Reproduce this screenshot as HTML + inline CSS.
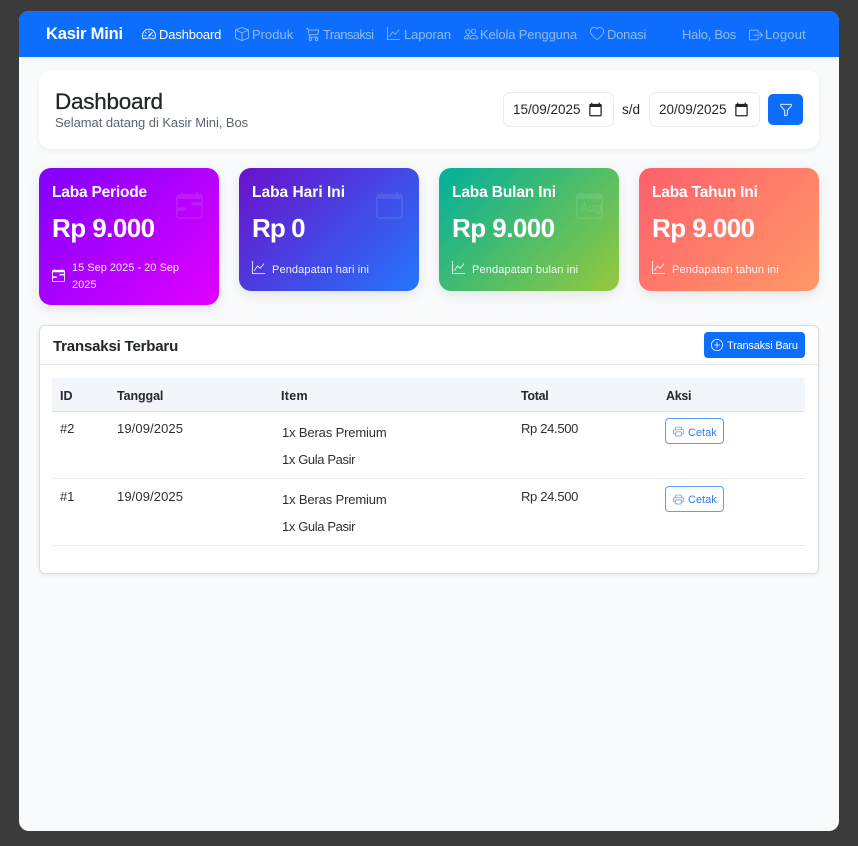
<!DOCTYPE html>
<html lang="id">
<head>
<meta charset="utf-8">
<title>Kasir Mini - Dashboard</title>
<style>
html,body{margin:0;padding:0;width:858px;height:846px;overflow:hidden;background:#3b3b3b;font-family:"Liberation Sans",sans-serif}
#win{position:absolute;left:19px;top:11px;width:820px;height:820px;background:#f8fafc;border-radius:10px;overflow:hidden}
#root{position:absolute;left:0;top:0;width:858px;height:846px}
.t{position:absolute;white-space:nowrap;line-height:20px;color:#212529}
.b{font-weight:bold}
.n{font-size:13px;color:#8fbbfe}
.w{color:#fff}
.s{font-size:11px;color:rgba(255,255,255,.92)}
.c{font-size:13px;color:#2b3035}
.h{font-size:12.5px;font-weight:bold;color:#24292e}
svg{position:absolute;fill:currentColor;display:block}
.box{position:absolute;box-sizing:border-box}
.card{position:absolute;width:180px;border-radius:12px;box-shadow:0 4px 12px rgba(0,0,0,.09)}
.big{color:#fff;opacity:.1}
.inp{background:#fff;border:1px solid #e9ecef;border-radius:7px;width:111px;height:35px;top:92px}
.cet{left:665px;width:59px;height:26px;border:1px solid #5f9cf5;border-radius:4px;background:#fff}
</style>
</head>
<body>
<svg width="0" height="0" style="position:absolute">
<defs>
<symbol id="gauge" viewBox="0 0 16 16"><path d="M8 4a.5.5 0 0 1 .5.5V6a.5.5 0 0 1-1 0V4.5A.5.5 0 0 1 8 4M3.732 5.732a.5.5 0 0 1 .707 0l.915.914a.5.5 0 1 1-.708.708l-.914-.915a.5.5 0 0 1 0-.707M2 10a.5.5 0 0 1 .5-.5h1.586a.5.5 0 0 1 0 1H2.5A.5.5 0 0 1 2 10m9.5 0a.5.5 0 0 1 .5-.5h1.5a.5.5 0 0 1 0 1H12a.5.5 0 0 1-.5-.5m.754-4.246a.39.39 0 0 0-.527-.02L7.547 9.31a.91.91 0 1 0 1.302 1.258l3.434-4.297a.39.39 0 0 0-.029-.518z"/><path fill-rule="evenodd" d="M0 10a8 8 0 1 1 15.547 2.661c-.442 1.253-1.845 1.602-2.932 1.25C11.309 13.488 9.475 13 8 13c-1.474 0-3.31.488-4.615.911-1.087.352-2.49.003-2.932-1.25A8 8 0 0 1 0 10m8-7a7 7 0 0 0-6.603 9.329c.203.575.923.876 1.68.63C4.397 12.533 6.358 12 8 12s3.604.532 4.923.96c.757.245 1.477-.056 1.68-.631A7 7 0 0 0 8 3"/></symbol>
<symbol id="box" viewBox="0 0 16 16"><path d="M8.186 1.113a.5.5 0 0 0-.372 0L1.846 3.5 8 5.961 14.154 3.5zM15 4.239l-6.5 2.6v7.922l6.5-2.6V4.24zM7.5 14.762V6.838L1 4.239v7.925zM7.443.184a1.5 1.5 0 0 1 1.114 0l7.129 2.852A.5.5 0 0 1 16 3.5v8.662a1 1 0 0 1-.629.928l-7.185 2.874a.5.5 0 0 1-.372 0L.63 13.09a1 1 0 0 1-.63-.928V3.5a.5.5 0 0 1 .314-.464z"/></symbol>
<symbol id="cart" viewBox="0 0 16 16"><path d="M0 1.5A.5.5 0 0 1 .5 1H2a.5.5 0 0 1 .485.379L2.89 3H14.5a.5.5 0 0 1 .49.598l-1 5a.5.5 0 0 1-.465.401l-9.397.472L4.415 11H13a.5.5 0 0 1 0 1H4a.5.5 0 0 1-.491-.408L2.01 3.607 1.61 2H.5a.5.5 0 0 1-.5-.5M3.102 4l.84 4.479 9.144-.459L13.89 4zM5 12a2 2 0 1 0 0 4 2 2 0 0 0 0-4m7 0a2 2 0 1 0 0 4 2 2 0 0 0 0-4m-7 1a1 1 0 1 1 0 2 1 1 0 0 1 0-2m7 0a1 1 0 1 1 0 2 1 1 0 0 1 0-2"/></symbol>
<symbol id="graph" viewBox="0 0 16 16"><path fill-rule="evenodd" d="M0 0h1v15h15v1H0zm14.817 3.113a.5.5 0 0 1 .07.704l-4.5 5.5a.5.5 0 0 1-.74.037L7.06 6.767l-3.656 5.027a.5.5 0 0 1-.808-.588l4-5.5a.5.5 0 0 1 .758-.06l2.609 2.61 4.15-5.073a.5.5 0 0 1 .704-.07"/></symbol>
<symbol id="people" viewBox="0 0 16 16"><path d="M15 14s1 0 1-1-1-4-5-4-5 3-5 4 1 1 1 1zm-7.978-1L7 12.996c.001-.264.167-1.03.76-1.72C8.312 10.629 9.282 10 11 10c1.717 0 2.687.63 3.24 1.276.593.69.758 1.457.76 1.72l-.008.002-.014.002zM11 7a2 2 0 1 0 0-4 2 2 0 0 0 0 4m3-2a3 3 0 1 1-6 0 3 3 0 0 1 6 0M6.936 9.28a6 6 0 0 0-1.23-.247A7 7 0 0 0 5 9c-4 0-5 3-5 4q0 1 1 1h4.216A2.24 2.24 0 0 1 5 13c0-1.01.377-2.042 1.09-2.904.243-.294.526-.569.846-.816M4.92 10A5.5 5.5 0 0 0 4 13H1c0-.26.164-1.03.76-1.724.545-.636 1.492-1.256 3.16-1.275ZM1.5 5.5a3 3 0 1 1 6 0 3 3 0 0 1-6 0m3-2a2 2 0 1 0 0 4 2 2 0 0 0 0-4"/></symbol>
<symbol id="heart" viewBox="0 0 16 16"><path d="m8 2.748-.717-.737C5.6.281 2.514.878 1.4 3.053c-.523 1.023-.641 2.5.314 4.385.92 1.815 2.834 3.989 6.286 6.357 3.452-2.368 5.365-4.542 6.286-6.357.955-1.886.838-3.362.314-4.385C13.486.878 10.4.28 8.717 2.01zM8 15C-7.333 4.868 3.279-3.04 7.824 1.143q.09.083.176.171a3 3 0 0 1 .176-.17C12.72-3.042 23.333 4.867 8 15"/></symbol>
<symbol id="logout" viewBox="0 0 16 16"><path fill-rule="evenodd" d="M10 12.5a.5.5 0 0 1-.5.5h-8a.5.5 0 0 1-.5-.5v-9a.5.5 0 0 1 .5-.5h8a.5.5 0 0 1 .5.5v2a.5.5 0 0 0 1 0v-2A1.5 1.5 0 0 0 9.5 2h-8A1.5 1.5 0 0 0 0 3.5v9A1.5 1.5 0 0 0 1.5 14h8a1.5 1.5 0 0 0 1.5-1.5v-2a.5.5 0 0 0-1 0z"/><path fill-rule="evenodd" d="M15.854 8.354a.5.5 0 0 0 0-.708l-3-3a.5.5 0 0 0-.708.708L14.293 7.5H5.5a.5.5 0 0 0 0 1h8.793l-2.147 2.146a.5.5 0 0 0 .708.708z"/></symbol>
<symbol id="funnel" viewBox="0 0 16 16"><path d="M1.5 1.5A.5.5 0 0 1 2 1h12a.5.5 0 0 1 .5.5v2a.5.5 0 0 1-.128.334L10 8.692V13.5a.5.5 0 0 1-.342.474l-3 1A.5.5 0 0 1 6 14.5V8.692L1.628 3.834A.5.5 0 0 1 1.5 3.5zm1 .5v1.308l4.372 4.858A.5.5 0 0 1 7 8.5v5.306l2-.666V8.5a.5.5 0 0 1 .128-.334L13.5 3.308V2z"/></symbol>
<symbol id="plus" viewBox="0 0 16 16"><path d="M8 15A7 7 0 1 1 8 1a7 7 0 0 1 0 14m0 1A8 8 0 1 0 8 0a8 8 0 0 0 0 16"/><path d="M8 4a.5.5 0 0 1 .5.5v3h3a.5.5 0 0 1 0 1h-3v3a.5.5 0 0 1-1 0v-3h-3a.5.5 0 0 1 0-1h3v-3A.5.5 0 0 1 8 4"/></symbol>
<symbol id="printer" viewBox="0 0 16 16"><path d="M2.5 8a.5.5 0 1 0 0-1 .5.5 0 0 0 0 1"/><path d="M5 1a2 2 0 0 0-2 2v2H2a2 2 0 0 0-2 2v3a2 2 0 0 0 2 2h1v1a2 2 0 0 0 2 2h6a2 2 0 0 0 2-2v-1h1a2 2 0 0 0 2-2V7a2 2 0 0 0-2-2h-1V3a2 2 0 0 0-2-2zM4 3a1 1 0 0 1 1-1h6a1 1 0 0 1 1 1v2H4zm1 5a2 2 0 0 0-2 2v1H2a1 1 0 0 1-1-1V7a1 1 0 0 1 1-1h12a1 1 0 0 1 1 1v3a1 1 0 0 1-1 1h-1v-1a2 2 0 0 0-2-2zm7 2v3a1 1 0 0 1-1 1H5a1 1 0 0 1-1-1v-3a1 1 0 0 1 1-1h6a1 1 0 0 1 1 1"/></symbol>
<symbol id="calrange" viewBox="0 0 16 16"><path d="M9 7a1 1 0 0 1 1-1h5v2h-5a1 1 0 0 1-1-1M1 9h4a1 1 0 0 1 0 2H1z"/><path d="M3.5 0a.5.5 0 0 1 .5.5V1h8V.5a.5.5 0 0 1 1 0V1h1a2 2 0 0 1 2 2v11a2 2 0 0 1-2 2H2a2 2 0 0 1-2-2V3a2 2 0 0 1 2-2h1V.5a.5.5 0 0 1 .5-.5M1 4v10a1 1 0 0 0 1 1h12a1 1 0 0 0 1-1V4z"/></symbol>
<symbol id="cal" viewBox="0 0 16 16"><path d="M3.5 0a.5.5 0 0 1 .5.5V1h8V.5a.5.5 0 0 1 1 0V1h1a2 2 0 0 1 2 2v11a2 2 0 0 1-2 2H2a2 2 0 0 1-2-2V3a2 2 0 0 1 2-2h1V.5a.5.5 0 0 1 .5-.5M1 4v10a1 1 0 0 0 1 1h12a1 1 0 0 0 1-1V4z"/></symbol>
<symbol id="picker" viewBox="0 0 24 24"><path d="M20 3h-1V1h-2v2H7V1H5v2H4c-1.1 0-2 .9-2 2v16c0 1.1.9 2 2 2h16c1.1 0 2-.9 2-2V5c0-1.1-.9-2-2-2zm0 18H4V8h16v13z"/></symbol>
</defs>
</svg>

<div id="win"></div>
<div id="root">
  <!-- Navbar -->
  <div class="box" style="left:19px;top:11px;width:820px;height:46px;background:#0d6efd;border-radius:10px 10px 0 0;box-shadow:0 1px 3px rgba(0,0,0,.08)"></div>
  <span class="t b w" style="left:46px;top:24px;font-size:16.5px;letter-spacing:-.2px">Kasir Mini</span>

  <svg class="w" style="left:142px;top:27px" width="14" height="14"><use href="#gauge"/></svg>
  <span class="t n w" style="left:159px;top:25px;letter-spacing:-.15px;color:#fff">Dashboard</span>
  <svg class="n" style="left:235px;top:27px" width="14" height="14"><use href="#box"/></svg>
  <span class="t n" style="left:252px;top:25px">Produk</span>
  <svg class="n" style="left:306px;top:27px" width="14" height="14"><use href="#cart"/></svg>
  <span class="t n" style="left:323px;top:25px;letter-spacing:-.6px">Transaksi</span>
  <svg class="n" style="left:387px;top:27px" width="13" height="13"><use href="#graph"/></svg>
  <span class="t n" style="left:404px;top:25px;letter-spacing:-.1px">Laporan</span>
  <svg class="n" style="left:464px;top:27px" width="14" height="14"><use href="#people"/></svg>
  <span class="t n" style="left:480px;top:25px;letter-spacing:-.14px">Kelola Pengguna</span>
  <svg class="n" style="left:590px;top:27px" width="14" height="14"><use href="#heart"/></svg>
  <span class="t n" style="left:607px;top:25px;letter-spacing:-.25px">Donasi</span>
  <span class="t n" style="left:682px;top:25px;letter-spacing:-.27px">Halo, Bos</span>
  <svg class="n" style="left:749px;top:28px" width="14" height="14"><use href="#logout"/></svg>
  <span class="t n" style="left:765px;top:25px;letter-spacing:.2px">Logout</span>

  <!-- Page header -->
  <div class="box" style="left:39px;top:70px;width:780px;height:79px;background:#fff;border-radius:12px;box-shadow:0 2px 6px rgba(0,0,0,.05)"></div>
  <span class="t" style="left:55px;top:92px;font-size:22.5px;letter-spacing:-.25px;-webkit-text-stroke:.25px #212529">Dashboard</span>
  <span class="t" style="left:55px;top:113px;font-size:13px;letter-spacing:-.06px;color:#5c646c">Selamat datang di Kasir Mini, Bos</span>

  <div class="box inp" style="left:503px"></div>
  <span class="t" style="left:513px;top:100px;font-size:13.5px">15/09/2025</span>
  <svg style="left:588px;top:102px;color:#212529" width="15" height="15"><use href="#picker"/></svg>
  <span class="t" style="left:622px;top:100px;font-size:13.5px">s/d</span>
  <div class="box inp" style="left:649px"></div>
  <span class="t" style="left:659px;top:100px;font-size:13.5px">20/09/2025</span>
  <svg style="left:734px;top:102px;color:#212529" width="15" height="15"><use href="#picker"/></svg>
  <div class="box" style="left:768px;top:94px;width:35px;height:31px;background:#0d6efd;border-radius:5px"></div>
  <svg class="w" style="left:779px;top:103px" width="14" height="14"><use href="#funnel"/></svg>

  <!-- Stat cards -->
  <div class="card" style="left:39px;top:168px;height:137px;background:linear-gradient(135deg,#7f00ff,#e100ff)"></div>
  <div class="card" style="left:239px;top:168px;height:123px;background:linear-gradient(135deg,#6a11cb,#2575fc)"></div>
  <div class="card" style="left:439px;top:168px;height:123px;background:linear-gradient(135deg,#00b09b,#96c93d)"></div>
  <div class="card" style="left:639px;top:168px;height:123px;background:linear-gradient(135deg,#ff5f6d,#ff9966)"></div>

  <svg class="big" style="left:176px;top:192px" width="27" height="27"><use href="#calrange"/></svg>
  <svg class="big" style="left:376px;top:192px" width="27" height="27"><use href="#cal"/></svg>
  <svg class="big" style="left:576px;top:192px" width="27" height="27"><use href="#cal"/></svg>
  <span class="t big" style="left:580px;top:198px;font-size:12.5px;letter-spacing:-.2px;opacity:.12">Aug</span>

  <span class="t b w" style="left:52px;top:183px;font-size:15.5px;letter-spacing:-.2px">Laba Periode</span>
  <span class="t b w" style="left:252px;top:183px;font-size:15.5px">Laba Hari Ini</span>
  <span class="t b w" style="left:452px;top:183px;font-size:15.5px;letter-spacing:-.14px">Laba Bulan Ini</span>
  <span class="t b w" style="left:652px;top:183px;font-size:15.5px;letter-spacing:-.18px">Laba Tahun Ini</span>

  <span class="t b w" style="left:52px;top:218px;font-size:26px;letter-spacing:-.55px">Rp 9.000</span>
  <span class="t b w" style="left:252px;top:218px;font-size:26px;letter-spacing:-.9px">Rp 0</span>
  <span class="t b w" style="left:452px;top:218px;font-size:26px;letter-spacing:-.55px">Rp 9.000</span>
  <span class="t b w" style="left:652px;top:218px;font-size:26px;letter-spacing:-.55px">Rp 9.000</span>

  <svg class="w" style="left:52px;top:269px" width="13" height="13"><use href="#calrange"/></svg>
  <span class="t s" style="left:72px;top:258px">15 Sep 2025 - 20 Sep</span>
  <span class="t s" style="left:72px;top:275px">2025</span>
  <svg class="w" style="left:252px;top:261px" width="13" height="13"><use href="#graph"/></svg>
  <span class="t s" style="left:272px;top:260px;letter-spacing:.12px">Pendapatan hari ini</span>
  <svg class="w" style="left:452px;top:261px" width="13" height="13"><use href="#graph"/></svg>
  <span class="t s" style="left:472px;top:260px;letter-spacing:.14px">Pendapatan bulan ini</span>
  <svg class="w" style="left:652px;top:261px" width="13" height="13"><use href="#graph"/></svg>
  <span class="t s" style="left:672px;top:260px;letter-spacing:.14px">Pendapatan tahun ini</span>

  <!-- Transactions -->
  <div class="box" style="left:39px;top:325px;width:780px;height:249px;background:#fff;border:1px solid #d9dde1;border-radius:6px;box-shadow:0 1px 4px rgba(0,0,0,.08)"></div>
  <div class="box" style="left:40px;top:364px;width:778px;height:1px;background:#e6e8eb"></div>
  <span class="t b" style="left:53px;top:337px;font-size:15px;letter-spacing:-.18px">Transaksi Terbaru</span>
  <div class="box" style="left:704px;top:332px;width:101px;height:26px;background:#0d6efd;border-radius:4px"></div>
  <svg class="w" style="left:711px;top:339px" width="12" height="12"><use href="#plus"/></svg>
  <span class="t s w" style="left:727px;top:336px;letter-spacing:-.2px;color:#fff">Transaksi Baru</span>

  <div class="box" style="left:52px;top:378px;width:753px;height:34px;background:#f2f5f9;border-bottom:1px solid #dee2e6"></div>
  <span class="t h" style="left:60px;top:386px">ID</span>
  <span class="t h" style="left:117px;top:386px;letter-spacing:-.1px">Tanggal</span>
  <span class="t h" style="left:281px;top:386px;letter-spacing:.3px">Item</span>
  <span class="t h" style="left:521px;top:386px;letter-spacing:-.3px">Total</span>
  <span class="t h" style="left:666px;top:386px;letter-spacing:-.3px">Aksi</span>

  <span class="t c" style="left:60px;top:419px;letter-spacing:-.1px">#2</span>
  <span class="t c" style="left:117px;top:419px;letter-spacing:.1px">19/09/2025</span>
  <span class="t c" style="left:282px;top:423px;letter-spacing:-.15px">1x Beras Premium</span>
  <span class="t c" style="left:282px;top:450px;letter-spacing:-.38px">1x Gula Pasir</span>
  <span class="t c" style="left:521px;top:419px;letter-spacing:-.33px">Rp 24.500</span>
  <div class="box cet" style="top:418px"></div>
  <svg style="left:673px;top:426px;color:#5b8fd9" width="11" height="11"><use href="#printer"/></svg>
  <span class="t" style="left:688px;top:423px;font-size:11px;color:#2f7df2">Cetak</span>
  <div class="box" style="left:52px;top:478px;width:753px;height:1px;background:#e9ecef"></div>

  <span class="t c" style="left:60px;top:487px;letter-spacing:-.1px">#1</span>
  <span class="t c" style="left:117px;top:487px;letter-spacing:.1px">19/09/2025</span>
  <span class="t c" style="left:282px;top:490px;letter-spacing:-.15px">1x Beras Premium</span>
  <span class="t c" style="left:282px;top:517px;letter-spacing:-.38px">1x Gula Pasir</span>
  <span class="t c" style="left:521px;top:487px;letter-spacing:-.33px">Rp 24.500</span>
  <div class="box cet" style="top:486px"></div>
  <svg style="left:673px;top:494px;color:#5b8fd9" width="11" height="11"><use href="#printer"/></svg>
  <span class="t" style="left:688px;top:490px;font-size:11px;color:#2f7df2">Cetak</span>
  <div class="box" style="left:52px;top:545px;width:753px;height:1px;background:#e9ecef"></div>
</div>
</body>
</html>
